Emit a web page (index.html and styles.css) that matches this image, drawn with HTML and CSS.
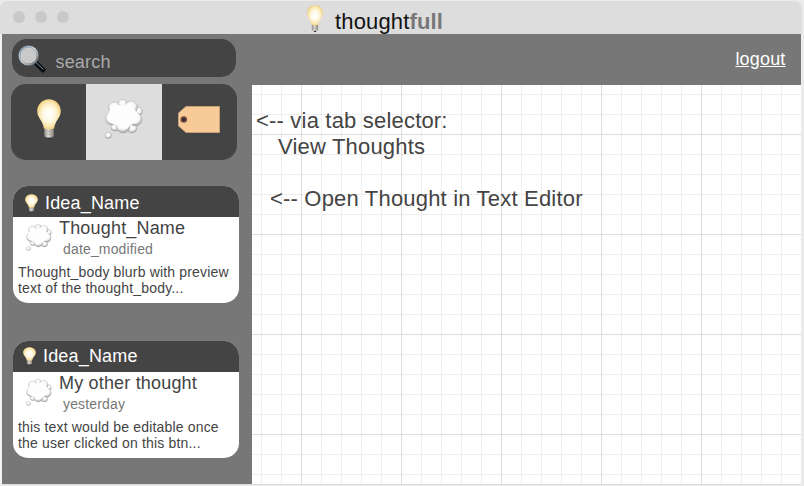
FILE: index.html
```html
<!DOCTYPE html>
<html lang="en">
<head>
<meta charset="utf-8">
<title>thoughtfull</title>
<link rel="stylesheet" href="styles.css">
</head>
<body>
<svg class="defs" width="0" height="0" aria-hidden="true">
  <defs>
    <radialGradient id="glow" cx=".5" cy=".5" r=".55">
      <stop offset="0" stop-color="#ffffff"/><stop offset=".4" stop-color="#fffbea"/><stop offset=".75" stop-color="#fae7b0"/><stop offset="1" stop-color="#ebc465"/>
    </radialGradient>
    <linearGradient id="metal"><stop offset="0" stop-color="#8e8983"/><stop offset=".4" stop-color="#e2ded8"/><stop offset="1" stop-color="#8b857e"/></linearGradient>
    <radialGradient id="puff" cx=".45" cy=".35" r=".65"><stop offset="0" stop-color="#fff"/><stop offset=".6" stop-color="#f2f2f2"/><stop offset="1" stop-color="#9c9c9c"/></radialGradient>
    <linearGradient id="rim" x2="1" y2="1"><stop offset="0" stop-color="#7797b4"/><stop offset=".5" stop-color="#dedede"/><stop offset="1" stop-color="#59636b"/></linearGradient>
    <symbol id="bulb" viewBox="0 0 24 40" preserveAspectRatio="none">
      <path d="M9.500 37.500h5l-1 2q-1.500.9-3 0z" fill="#242424"/>
      <path d="M7.300 29h9.400v8.200q-4.700 3-9.400 0z" fill="url(#metal)"/>
      <path d="M7.300 31.800q4.700 1.600 9.400 0M7.300 34.600q4.700 1.600 9.400 0" stroke="#a29c95" stroke-width=".6" fill="none"/>
      <path d="M12 .3C5.300.3.2 5.500.2 12.200c0 6.800 6 9.300 6.600 17.300q5.200 1.300 10.400 0c.6-8 6.600-10.500 6.600-17.300C23.800 5.500 18.700.3 12 .3z" fill="url(#glow)"/>
    </symbol>
    <symbol id="cloud" viewBox="0 0 38 40">
      <g fill="url(#puff)" stroke="#999" stroke-width=".4">
        <circle cx="17.500" cy="5" r="4.500"/><circle cx="33" cy="12.500" r="4.300"/><circle cx="10" cy="28" r="4"/><circle cx="27" cy="29" r="5"/>
        <circle cx="9.500" cy="9" r="6"/><circle cx="26" cy="8.500" r="6.500"/><circle cx="7" cy="19.500" r="6.500"/><circle cx="30.500" cy="20.500" r="6.500"/><circle cx="18" cy="27" r="7"/>
        <circle cx="3.300" cy="36.300" r="3.100"/>
      </g>
      <path d="M6 9Q11 4 17 7q9-5 13 4 6 7 1 12-6 2-8 6-6 3-10-3-8 0-10-6 0-7 3-11z" fill="#fdfdfd"/>
    </symbol>
  </defs>
</svg>
<div class="window">
  <header class="titlebar">
    <div class="dots"><i></i><i></i><i></i></div>
    <div class="brand"><svg class="brand-bulb"><use href="#bulb"/></svg><h1>thought<b>full</b></h1></div>
  </header>
  <div class="app">
    <aside class="sidebar">
      <div class="search">
        <svg class="lens" viewBox="0 0 28 28">
          <path d="M18.500 18.500l6.500 6.500" stroke="#0c1014" stroke-width="4.800" stroke-linecap="round"/>
          <path d="M17.500 17l8 7.500" stroke="#7d8a94" stroke-width="1"/>
          <circle cx="10.500" cy="10.500" r="9.400" fill="#c9c9c9" stroke="#59656f" stroke-width="2.200"/>
          <circle cx="10.500" cy="10.500" r="9.100" fill="none" stroke="url(#rim)" stroke-width="1.500"/>
        </svg>
        <span>search</span>
      </div>
      <nav class="tabs">
        <a class="tab"><svg class="tab-bulb"><use href="#bulb"/></svg></a>
        <a class="tab active"><svg class="tab-cloud"><use href="#cloud"/></svg></a>
        <a class="tab"><svg class="tab-tag" viewBox="0 0 42 27"><path d="M8 .5h33.500v26H8L.5 20V7z" fill="#f7ca98" stroke="#e3b57f" stroke-width=".6"/><circle cx="5.800" cy="13.500" r="3.300" fill="#794b42"/><circle cx="5.800" cy="13.500" r="1.700" fill="#2d2b31"/></svg></a>
      </nav>
      <article class="card">
        <h2 class="idea"><svg class="idea-bulb"><use href="#bulb"/></svg>Idea_Name</h2>
        <div class="thought">
          <svg class="card-cloud"><use href="#cloud"/></svg>
          <div><h3>Thought_Name</h3><time>date_modified</time></div>
        </div>
        <p>Thought_body blurb with preview<br>text of the thought_body...</p>
      </article>
      <article class="card">
        <h2 class="idea raised"><svg class="idea-bulb"><use href="#bulb"/></svg>Idea_Name</h2>
        <div class="thought">
          <svg class="card-cloud"><use href="#cloud"/></svg>
          <div><h3>My other thought</h3><time>yesterday</time></div>
        </div>
        <p>this text would be editable once<br>the user clicked on this btn...</p>
      </article>
    </aside>
    <div class="main">
      <div class="topbar"><a class="logout">logout</a></div>
      <main class="canvas">
        <p>&lt;-- via tab selector:</p>
        <p class="indent">View Thoughts</p>
        <p class="note">&lt;-- Open Thought in Text Editor</p>
      </main>
    </div>
  </div>
</div>
</body>
</html>
```
FILE: styles.css
```css
* { box-sizing: border-box; }
body { margin: 0; background: #ebebeb; font-family: "Liberation Sans", Arial, sans-serif; color: #444; overflow: hidden; }
h1, h2, h3, p { margin: 0; font-weight: normal; }
svg { display: block; flex: none; }
.defs { position: absolute; }
.window { width: 802px; height: 484px; margin-top: 1px; }
.titlebar { display: grid; height: 33px; background: #ddd; border-radius: 8px 8px 0 0; }
.dots { grid-area: 1 / 1; display: flex; gap: 10px; padding: 10px 13px; }
.dots i { width: 12px; height: 12px; border-radius: 50%; background: #c9c9c9; }
.brand { grid-area: 1 / 1; display: flex; padding-left: 307px; }
.brand-bulb { width: 16px; height: 27px; margin-top: 4px; }
h1 { margin: 8px 0 0 12px; font-size: 22px; line-height: 26px; letter-spacing: .15px; color: #111; }
h1 b { color: #777; }
.app { display: flex; height: 451px; margin: 0 1px 0 0; border-left: 2px solid #f3f3f3; border-bottom: 1px solid #ddd; background: #777; }
.sidebar { width: 250px; flex: none; padding: 5px 0 0 9px; }
.search { display: flex; width: 224px; height: 38px; margin-left: 1px; padding: 6px 0 0 6px; border-radius: 15px; background: #444; }
.lens { width: 28px; height: 28px; }
.search span { margin: 7px 0 0 9.500px; font-size: 18px; line-height: 20px; letter-spacing: .18px; color: #aaa; }
.tabs { display: grid; grid-template-columns: 75px 76px 75px; width: 226px; height: 76px; margin-top: 7px; border-radius: 15px; overflow: hidden; background: #444; }
.tab { display: flex; justify-content: center; align-items: flex-start; }
.active { background: #ddd; }
.tab-bulb { width: 24px; height: 40px; margin: 15px 0 0 1px; }
.tab-cloud { width: 38px; height: 40px; margin-top: 15px; }
.tab-tag { width: 42px; height: 27px; margin: 22px 1px 0 0; }
.card { width: 226px; height: 117px; margin: 26px 0 0 2px; border-radius: 15px; overflow: hidden; background: #fff; }
.card + .card { margin-top: 38px; }
.idea { display: flex; height: 31px; padding: 7px 0 0 12px; background: #444; color: #fff; font-size: 18px; line-height: 20px; letter-spacing: .18px; }
.idea-bulb { width: 13px; height: 18px; margin: 1px 7px 0 0; }
.raised { padding: 5px 0 0 10px; }
.thought { display: flex; height: 47px; }
.card-cloud { width: 26px; height: 27px; margin: 7px 7px 0 13px; }
h3 { margin-top: 1px; font-size: 18px; line-height: 20px; letter-spacing: .18px; }
time { display: block; margin: 3px 0 0 4px; font-size: 14px; line-height: 16px; letter-spacing: .16px; color: #777; }
.card p { padding-left: 5px; font-size: 14px; line-height: 16px; letter-spacing: .17px; white-space: nowrap; }
.main { flex: 1; display: flex; flex-direction: column; }
.topbar { display: flex; justify-content: flex-end; height: 51px; padding: 15px 15.500px 0 0; }
.logout { color: #fff; font-size: 18px; line-height: 20px; letter-spacing: .18px; text-decoration: underline; }
.canvas {
  flex: 1; padding: 23px 0 0 4px; font-size: 22px; line-height: 26px; letter-spacing: .19px; background-color: #fff;
  background-image: linear-gradient(90deg, #ddd 1px, transparent 1px), linear-gradient(#ddd 1px, transparent 1px), linear-gradient(90deg, #eee 1px, transparent 1px), linear-gradient(#eee 1px, transparent 1px);
  background-size: 100px 100px, 100px 100px, 20px 20px, 20px 20px;
  background-position: 49px 0, 0 49px, 9px 0, 0 9px;
}
.indent { padding-left: 22px; }
.note { margin-top: 26px; padding-left: 14px; }
```
